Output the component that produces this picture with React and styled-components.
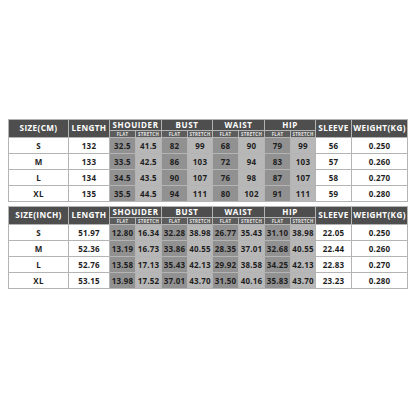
import React from "react";
import styled, { createGlobalStyle } from "styled-components";

const GlobalStyle = createGlobalStyle`
	html, body {
		margin: 0;
		padding: 0;
		background: #ffffff;
	}
	body {
		font-family: "Open Sans", "Liberation Sans", sans-serif;
	}
`;

const Page = styled.div`
	width: 416px;
	height: 416px;
	box-sizing: border-box;
	padding: 119px 0 0 8px;
	display: flex;
	flex-direction: column;
	gap: 4px;
`;

const Table = styled.div`
	display: grid;
	grid-template-columns: 59px 40px 25px 25px 25px 24px 25px 25px 25px 24px 35px 55px;
	grid-template-rows: 10px 6px repeat(4, 15px);
	gap: 1px;
	padding: 1px;
	width: max-content;
	background: #b4b4b4;
`;

const HeadCell = styled.div`
	grid-row: ${(p) => (p.$span ? "1 / span 2" : "1")};
	grid-column: ${(p) => (p.$cols ? `span ${p.$cols}` : "auto")};
	background: #4e4e4e;
	color: #ffffff;
	font-weight: 700;
	font-size: ${(p) => (p.$wide ? "8px" : "8.2px")};
	letter-spacing: ${(p) => (p.$wide ? "0.6px" : "0.35px")};
	display: flex;
	align-items: center;
	justify-content: center;
	white-space: nowrap;
	line-height: 1;
`;

const SubCell = styled.div`
	grid-row: 2;
	background: #5c5c5c;
	color: #e6e6e6;
	font-weight: 700;
	font-size: 4.4px;
	letter-spacing: 0.3px;
	display: flex;
	align-items: center;
	justify-content: center;
	line-height: 1;
	white-space: nowrap;
`;

const shades = {
	plain: "#ffffff",
	flat: "#919191",
	stretch: "#b7b7b7",
};

const Cell = styled.div`
	background: ${(p) => shades[p.$shade]};
	color: #1e1e1e;
	font-weight: 700;
	font-size: 8px;
	letter-spacing: 0.2px;
	display: flex;
	align-items: center;
	justify-content: center;
	line-height: 1;
	white-space: nowrap;
`;

const shading = [
	"plain",
	"plain",
	"flat",
	"stretch",
	"flat",
	"stretch",
	"flat",
	"stretch",
	"flat",
	"stretch",
	"plain",
	"plain",
];

const cmRows = [
	["S", "132", "32.5", "41.5", "82", "99", "68", "90", "79", "99", "56", "0.250"],
	["M", "133", "33.5", "42.5", "86", "103", "72", "94", "83", "103", "57", "0.260"],
	["L", "134", "34.5", "43.5", "90", "107", "76", "98", "87", "107", "58", "0.270"],
	["XL", "135", "35.5", "44.5", "94", "111", "80", "102", "91", "111", "59", "0.280"],
];

const inchRows = [
	["S", "51.97", "12.80", "16.34", "32.28", "38.98", "26.77", "35.43", "31.10", "38.98", "22.05", "0.250"],
	["M", "52.36", "13.19", "16.73", "33.86", "40.55", "28.35", "37.01", "32.68", "40.55", "22.44", "0.260"],
	["L", "52.76", "13.58", "17.13", "35.43", "42.13", "29.92", "38.58", "34.25", "42.13", "22.83", "0.270"],
	["XL", "53.15", "13.98", "17.52", "37.01", "43.70", "31.50", "40.16", "35.83", "43.70", "23.23", "0.280"],
];

const groups = ["SHOUIDER", "BUST", "WAIST", "HIP"];

function SizeTable({ unit, rows }) {
	return (
		<Table>
			<HeadCell $span>{unit}</HeadCell>
			<HeadCell $span>LENGTH</HeadCell>
			{groups.map((g) => (
				<HeadCell key={g} $cols={2} $wide>
					{g}
				</HeadCell>
			))}
			<HeadCell $span>SLEEVE</HeadCell>
			<HeadCell $span>WEIGHT(KG)</HeadCell>
			{groups.map((g) => (
				<React.Fragment key={g}>
					<SubCell>FLAT</SubCell>
					<SubCell>STRETCH</SubCell>
				</React.Fragment>
			))}
			{rows.map((row) =>
				row.map((v, i) => (
					<Cell key={row[0] + i} $shade={shading[i]}>
						{v}
					</Cell>
				))
			)}
		</Table>
	);
}

export default function App() {
	return (
		<>
			<GlobalStyle />
			<Page>
				<SizeTable unit="SIZE(CM)" rows={cmRows} />
				<SizeTable unit="SIZE(INCH)" rows={inchRows} />
			</Page>
		</>
	);
}
